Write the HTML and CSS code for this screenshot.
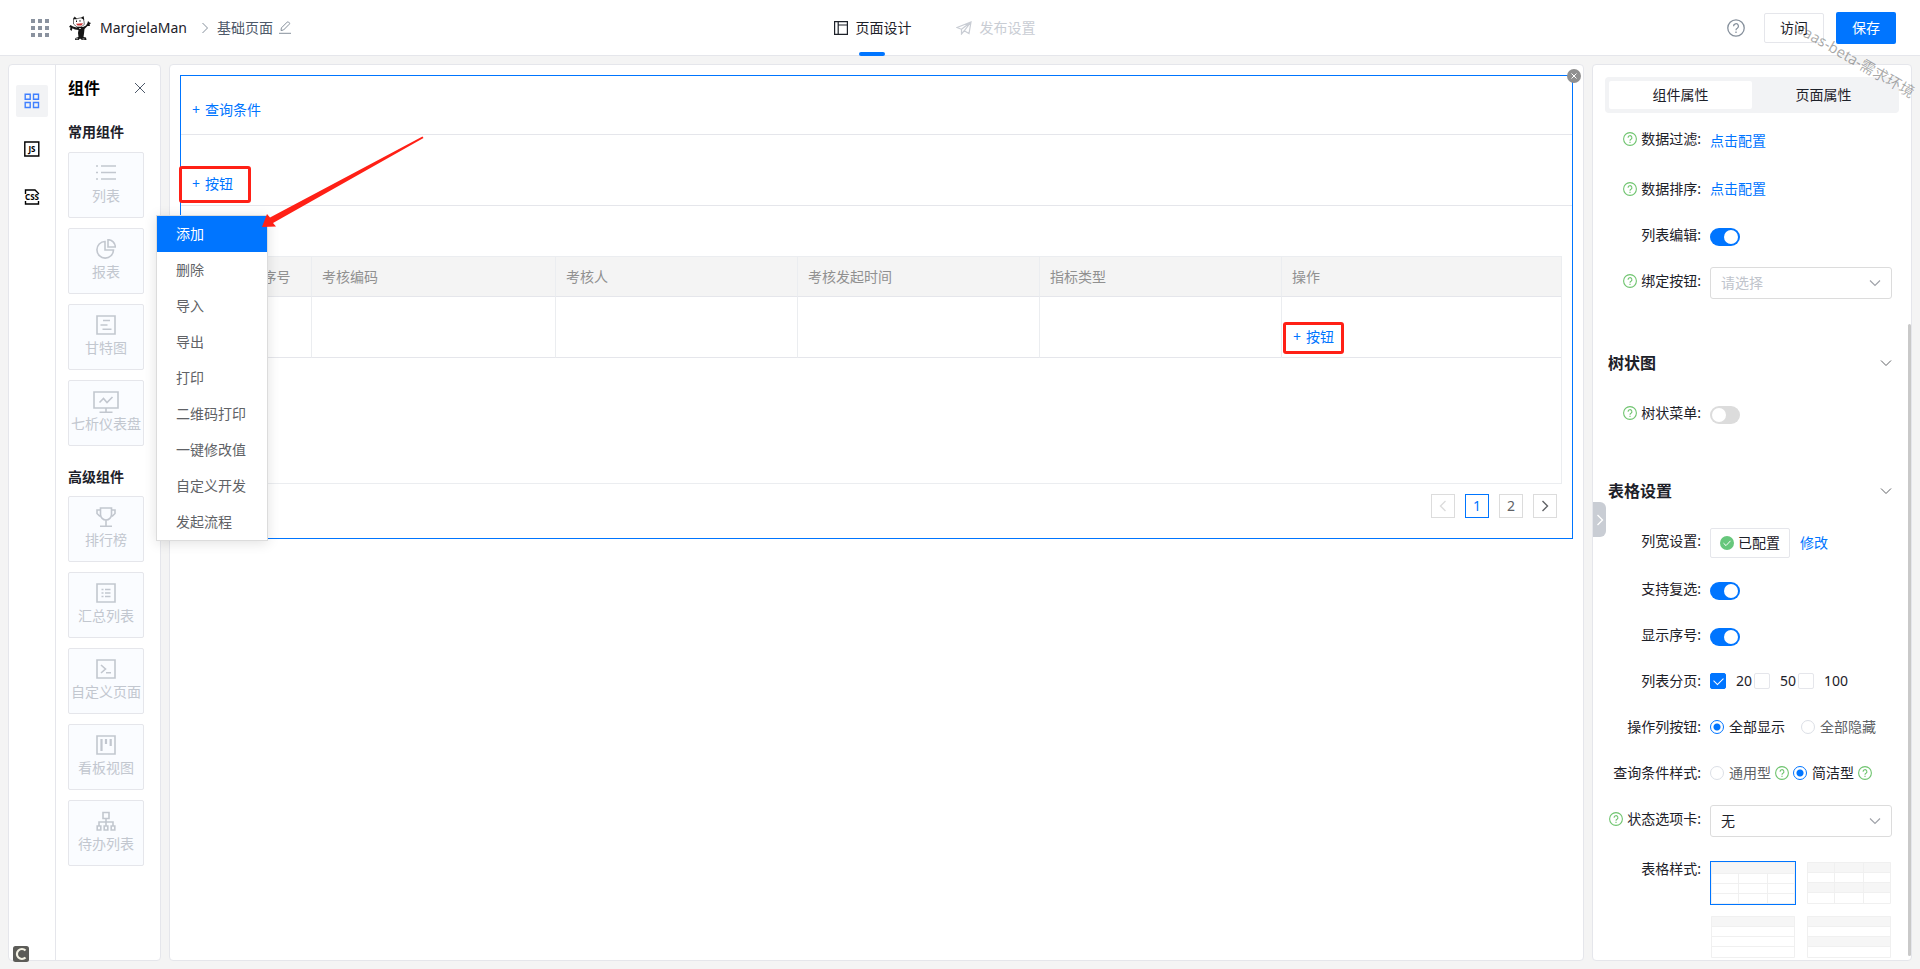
FILE: index.html
```html
<!DOCTYPE html>
<html lang="zh-CN">
<head>
<meta charset="utf-8">
<title>基础页面 - MargielaMan</title>
<link rel="stylesheet" href="styles.css">
</head>
<body>
<svg class="defs" aria-hidden="true">
  <symbol id="help" viewBox="0 0 14 14"><circle cx="7" cy="7" r="6.4"/><path d="M5.100 5.700a1.900 1.900 0 1 1 2.900 1.500c-.7.400-1 .8-1 1.500M7 9.800v1.100"/></symbol>
  <symbol id="down" viewBox="0 0 12 12"><path d="M1 3.5l5 5 5-5"/></symbol>
  <symbol id="right" viewBox="0 0 12 12"><path d="M3.5 1l5 5-5 5"/></symbol>
</svg>

<header class="topbar">
  <div class="brand">
    <button class="icon-btn" aria-label="应用"><svg class="apps" viewBox="0 0 18 18"><path d="M0 0h4v4H0zM7 0h4v4H7zM14 0h4v4h-4zM0 7h4v4H0zM7 7h4v4H7zM14 7h4v4h-4zM0 14h4v4H0zM7 14h4v4H7zM14 14h4v4h-4z"/></svg></button>
    <svg class="logo" viewBox="0 0 22 24">
      <path d="M4.500 2L7 3l3-.8L14 1.500l1 4 .3 3-3.300 2.500H8L4.500 8z" fill="#fff" stroke="#333" stroke-width=".7"/>
      <path d="M4.500 3.500L5.500.5 8 2.800zM12 2l2.500-2 .8 4z" fill="#111"/>
      <path d="M7 7.800l7-.5-1.500 2.200H8.500z" fill="#c33"/>
      <path d="M7.500 4.500v1.500M11 4.200v1.500" stroke="#111" stroke-width="1"/>
      <path d="M0 11l1.500-2 2.500 1.500 3.500 1 1-.5h5.500l3-1.500L18.500 7l.5-2 1.500 1.500L22 7l-1.500 1.500.5 1.500-2.500 0-3 3-.5 4.500-.5 3.500 2.500.5.5 2.500h-4.500L11 22.500 9.500 24H6l.5-2 3-1L9 17l.5-3-3.500-.5-2.500-1.300L2.500 15 1 13.500l.5-2z" fill="#151515"/>
      <path d="M7 22.800h2M13.500 23h2M10 12.500h2" stroke="#fff" stroke-width=".7"/>
    </svg>
    <span class="brand-name">MargielaMan</span>
    <svg class="crumb-sep" viewBox="0 0 12 12"><use href="#right"/></svg>
    <span class="crumb">基础页面</span>
    <button class="icon-btn" aria-label="重命名"><svg class="pencil" viewBox="0 0 12 13"><path d="M2 9.500l.4-2.600L8.200 1.100a1 1 0 0 1 1.400 0l.7.700a1 1 0 0 1 0 1.400L4.500 9z M0 12.300h12"/></svg></button>
  </div>
  <nav class="tabs">
    <a class="tab tab--on" href="#design"><svg class="tab-ico" viewBox="0 0 14 14"><path d="M.6.600h12.800v12.800H.6zM4.200.600v12.800M4.200 4h9.200"/></svg>页面设计</a>
    <a class="tab" href="#publish"><svg class="tab-ico tab-ico--send" viewBox="0 0 16 14"><path d="M1 6.500L15 1l-2 11.500-4.800-2.700L5.500 13V8.300zM5.500 8.300L15 1 8.200 9.800"/></svg>发布设置</a>
  </nav>
  <div class="actions">
    <button class="icon-btn" aria-label="帮助"><svg class="help-lg" viewBox="0 0 14 14"><use href="#help"/></svg></button>
    <button class="btn">访问</button>
    <button class="btn btn--primary">保存</button>
  </div>
</header>

<div class="workspace">
  <aside class="side">
    <div class="rail">
      <button class="rail-btn rail-btn--on" aria-label="组件"><svg viewBox="0 0 16 16"><path d="M1.200 1.200h5v5h-5zM9.500 1.200h5v5h-5zM1.200 9.500h5v5h-5zM9.500 9.500h5v5h-5z"/></svg></button>
      <button class="rail-btn" aria-label="脚本"><svg viewBox="0 0 16 16"><path d="M.8 1h14v14H.8z"/><text x="8" y="10.500">JS</text></svg></button>
      <button class="rail-btn" aria-label="样式"><svg viewBox="0 0 16 16"><path d="M1.500 5V1h9.500l3.500 3.500V5M1.500 12v3h13v-3"/><text x="8" y="11">CSS</text></svg></button>
    </div>
    <div class="palette">
      <div class="palette-head"><h2>组件</h2><button class="icon-btn" aria-label="关闭"><svg class="close" viewBox="0 0 10 10"><path d="M0 0l10 10M10 0L0 10"/></svg></button></div>
      <h3>常用组件</h3>
      <div class="cards">
        <button class="card"><svg viewBox="0 0 20 20"><path d="M0 3h2M0 9.500h2M0 16h2M5 3h15M5 9.500h15M5 16h15"/></svg>列表</button>
        <button class="card"><svg viewBox="0 0 20 20"><path d="M9 2.500a8.300 8.300 0 1 0 8.500 8.500H9zM12 .700v7.300h7.300A7.300 7.300 0 0 0 12 .700z"/></svg>报表</button>
        <button class="card"><svg viewBox="0 0 20 20"><path d="M1 1h18v18H1zM7 5.500h7M4.500 10h7M6.500 14.300h9"/></svg>甘特图</button>
        <button class="card"><svg class="wide" viewBox="0 0 26 22"><path d="M1 1h24v16H1zM13 17v4M6.500 21.200h13M6.500 11.500l4-4 3.500 4L19.500 6"/></svg>七析仪表盘</button>
      </div>
      <h3 class="second">高级组件</h3>
      <div class="cards">
        <button class="card"><svg viewBox="0 0 20 20"><path d="M4.500 1h11v6.500a5.500 5.500 0 0 1-11 0zM4.500 3H1v3.500L4 9.500M15.500 3H19v3.500L16 9.500M10 13v6M4 19.200h12"/></svg>排行榜</button>
        <button class="card"><svg viewBox="0 0 20 20"><path d="M1 1h18v18H1zM5.500 6.500h2M9 6.500h5.500M5.500 10h2M9 10h5.500M5.500 13.500h2M9 13.500h5.500"/></svg>汇总列表</button>
        <button class="card"><svg viewBox="0 0 20 20"><path d="M1 1h18v18H1zM5 6l4.500 4L5 14M10 13.700h5"/></svg>自定义页面</button>
        <button class="card"><svg viewBox="0 0 20 20"><path d="M1 1h18v18H1z"/><path class="bars" d="M5.500 4v12M10 4v5M14.700 4v7"/></svg>看板视图</button>
        <button class="card"><svg viewBox="0 0 20 20"><path d="M7 1.500h6v6H7zM10 7.500v7M3 14.500V11h14v3.500M1.200 15h3.600v4H1.200zM8.200 15h3.600v4H8.200zM15.200 15h3.600v4h-3.600z"/></svg>待办列表</button>
      </div>
    </div>
  </aside>

  <main class="canvas">
    <section class="block">
      <button class="block-close" aria-label="删除组件"><svg viewBox="0 0 14 14"><path d="M4.500 4.500l5 5M9.500 4.500l-5 5"/></svg></button>
      <div class="strip strip--query"><button class="add"><span>+</span>查询条件</button></div>
      <div class="strip strip--ops"><button class="add"><span>+</span>按钮</button></div>
      <div class="grid-wrap">
        <table class="grid">
          <colgroup><col class="c-check"><col class="c-no"><col class="c-code"><col class="c-mid"><col class="c-mid"><col class="c-mid"><col></colgroup>
          <thead><tr><th class="bare"></th><th class="mid">序号</th><th>考核编码</th><th>考核人</th><th>考核发起时间</th><th>指标类型</th><th>操作</th></tr></thead>
          <tbody><tr><td class="bare"></td><td></td><td></td><td></td><td></td><td></td><td><button class="add"><span>+</span>按钮</button></td></tr></tbody>
        </table>
      </div>
      <nav class="pager" aria-label="分页">
        <button class="page page--off" aria-label="上一页"><svg viewBox="0 0 12 12"><path d="M8.500 1l-5 5 5 5"/></svg></button>
        <button class="page page--on">1</button>
        <button class="page">2</button>
        <button class="page" aria-label="下一页"><svg viewBox="0 0 12 12"><use href="#right"/></svg></button>
      </nav>
    </section>
  </main>

  <aside class="props">
    <div class="switcher"><button class="seg seg--on">组件属性</button><button class="seg">页面属性</button></div>
    <button class="collapse" aria-label="收起"><svg viewBox="0 0 12 12"><use href="#right"/></svg></button>
    <div class="thumb-bar"></div>
    <div class="form">
      <div class="row row--wide"><span class="label"><svg class="help" viewBox="0 0 14 14"><use href="#help"/></svg>数据过滤:</span><div class="ctl"><a href="#filter">点击配置</a></div></div>
      <div class="row"><span class="label"><svg class="help" viewBox="0 0 14 14"><use href="#help"/></svg>数据排序:</span><div class="ctl ctl--low"><a href="#sort">点击配置</a></div></div>
      <div class="row"><label class="label" for="edit">列表编辑:</label><div class="ctl"><input class="switch" type="checkbox" role="switch" id="edit" checked></div></div>
      <div class="row"><label class="label" for="bind"><svg class="help" viewBox="0 0 14 14"><use href="#help"/></svg>绑定按钮:</label><div class="ctl"><div class="pick"><select class="empty" id="bind"><option>请选择</option></select><svg><use href="#down"/></svg></div></div></div>

      <button class="section section--tree">树状图<svg><use href="#down"/></svg></button>
      <div class="row"><label class="label" for="tree"><svg class="help" viewBox="0 0 14 14"><use href="#help"/></svg>树状菜单:</label><div class="ctl"><input class="switch" type="checkbox" role="switch" id="tree"></div></div>

      <button class="section">表格设置<svg><use href="#down"/></svg></button>
      <div class="row row--mid"><span class="label">列宽设置:</span><div class="ctl"><span class="done"><svg viewBox="0 0 14 14"><circle cx="7" cy="7" r="7"/><path d="M3.500 7.200L6 9.600l4.500-4.800"/></svg>已配置</span><a class="edit" href="#width">修改</a></div></div>
      <div class="row"><label class="label" for="multi">支持复选:</label><div class="ctl"><input class="switch" type="checkbox" role="switch" id="multi" checked></div></div>
      <div class="row"><label class="label" for="index">显示序号:</label><div class="ctl"><input class="switch" type="checkbox" role="switch" id="index" checked></div></div>
      <div class="row"><span class="label">列表分页:</span><div class="ctl ctl--low ctl--checks"><label class="check"><input type="checkbox" checked>20</label><label class="check"><input type="checkbox">50</label><label class="check"><input type="checkbox">100</label></div></div>
      <div class="row"><span class="label">操作列按钮:</span><div class="ctl ctl--low ctl--radios"><label class="radio"><input type="radio" name="ops" checked>全部显示</label><label class="radio"><input type="radio" name="ops"><span>全部隐藏</span></label></div></div>
      <div class="row"><span class="label">查询条件样式:</span><div class="ctl ctl--low ctl--tight"><label class="radio"><input type="radio" name="query"><span>通用型</span></label><svg class="help" viewBox="0 0 14 14"><use href="#help"/></svg><label class="radio"><input type="radio" name="query" checked>简洁型</label><svg class="help" viewBox="0 0 14 14"><use href="#help"/></svg></div></div>
      <div class="row row--wide"><label class="label" for="state"><svg class="help" viewBox="0 0 14 14"><use href="#help"/></svg>状态选项卡:</label><div class="ctl"><div class="pick"><select id="state"><option>无</option></select><svg><use href="#down"/></svg></div></div></div>
      <div class="row"><span class="label">表格样式:</span>
        <div class="styles">
          <button class="style style--on" aria-label="样式一"><svg viewBox="0 0 84 42"><path class="f" d="M0 0h84v11H0z"/><path d="M.5.500h83v41H.5zM0 11.500h84M0 21.500h84M0 31.500h84M27.500 11v31M56.500 11v31"/></svg></button>
          <button class="style" aria-label="样式二"><svg viewBox="0 0 84 42"><path class="f" d="M0 0h84v11H0zM0 21h84v10H0z"/><path d="M.5.500h83v41H.5zM0 10.500h84M0 20.500h84M0 30.500h84M27.500 0v42M56.500 0v42"/></svg></button>
          <button class="style" aria-label="样式三"><svg viewBox="0 0 84 42"><path class="f" d="M0 0h84v11H0z"/><path d="M.5.500h83v41H.5zM0 10.500h84M0 20.500h84M0 30.500h84"/></svg></button>
          <button class="style" aria-label="样式四"><svg viewBox="0 0 84 42"><path class="f" d="M0 0h84v11H0zM0 21h84v10H0z"/><path d="M.5.500h83v41H.5zM0 10.500h84M0 20.500h84M0 30.500h84"/></svg></button>
        </div>
      </div>
    </div>
  </aside>
</div>

<ul class="menu" role="menu">
  <li><button class="item item--on" role="menuitem">添加</button></li>
  <li><button class="item" role="menuitem">删除</button></li>
  <li><button class="item" role="menuitem">导入</button></li>
  <li><button class="item" role="menuitem">导出</button></li>
  <li><button class="item" role="menuitem">打印</button></li>
  <li><button class="item" role="menuitem">二维码打印</button></li>
  <li><button class="item" role="menuitem">一键修改值</button></li>
  <li><button class="item" role="menuitem">自定义开发</button></li>
  <li><button class="item" role="menuitem">发起流程</button></li>
</ul>

<div class="mark mark--ops"></div>
<div class="mark mark--cell"></div>
<svg class="arrow" viewBox="0 0 164 94"><path d="M1 91L6 78l3 3.500L161.500.500l1 1.500L12 87l3 3.500z"/></svg>
<div class="watermark">saas-beta-需求环境</div>
<svg class="badge" viewBox="0 0 16 16"><rect width="16" height="16" rx="2.500"/><path d="M12.500 4.500A5 5 0 1 0 12.500 11.500"/></svg>
</body>
</html>
```

FILE: styles.css
```css
* { box-sizing: border-box; }
body {
  margin: 0;
  height: 100vh;
  display: flex;
  flex-direction: column;
  overflow: hidden;
  position: relative;
  background: #f4f4f4;
  color: #1d2129;
  font: 14px/20px "Noto Sans", "Noto Sans CJK SC", sans-serif;
}
button, select, input { font: inherit; color: inherit; margin: 0; }
button { padding: 0; border: 0; background: none; cursor: pointer; }
a { color: #0075ff; text-decoration: none; }
h2, h3, ul { margin: 0; padding: 0; }
svg { display: block; flex: none; fill: none; stroke: currentColor; }
.defs { position: absolute; width: 0; height: 0; }
.icon-btn { display: flex; }

/* top bar */
.topbar {
  display: grid;
  grid-template-columns: 1fr auto 1fr;
  height: 56px;
  flex: none;
  padding: 0 24px 0 31px;
  background: #fff;
  border-bottom: 1px solid #e5e6eb;
}
.brand, .actions { display: flex; align-items: center; }
.apps { width: 18px; height: 18px; fill: #8a929f; stroke: none; }
.logo { width: 22px; height: 24px; margin-left: 20px; stroke: none; }
.brand-name { margin-left: 9px; }
.crumb-sep { width: 12px; height: 12px; margin: 0 6px 0 12px; color: #86909c; }
.crumb { color: #4e5969; }
.pencil { width: 12px; height: 13px; margin-left: 6px; color: #86909c; }
.tabs { display: flex; gap: 44px; margin-right: 58px; }
.tab { position: relative; display: flex; align-items: center; gap: 8px; color: #c9cdd4; }
.tab--on { color: #1d2129; }
.tab--on::after {
  content: "";
  position: absolute;
  left: 50%;
  bottom: -1px;
  width: 26px;
  height: 4px;
  margin-left: -14px;
  border-radius: 2px;
  background: #0075ff;
}
.tab-ico { width: 14px; height: 14px; stroke-width: 1.2; }
.tab-ico--send { width: 16px; }
.actions { justify-content: flex-end; }
.help-lg { width: 18px; height: 18px; margin-right: 19px; color: #86909c; }
.btn { width: 60px; height: 30px; border: 1px solid #e5e6eb; border-radius: 2px; background: #fff; }
.btn--primary { height: 32px; margin-left: 12px; border: 0; background: #0075ff; color: #fff; }

.workspace { flex: 1; min-height: 0; display: flex; gap: 8px; padding: 8px; }
.side, .canvas, .props { border: 1px solid #e5e6eb; border-radius: 4px; background: #fff; }

/* left side */
.side { display: flex; flex: none; }
.rail {
  display: flex;
  flex-direction: column;
  gap: 16px;
  width: 47px;
  padding: 20px 7px;
  border-right: 1px solid #e5e6eb;
}
.rail-btn {
  display: flex;
  align-items: center;
  justify-content: center;
  width: 32px;
  height: 32px;
  border-radius: 2px;
  color: #000;
}
.rail-btn--on { background: #f2f3f5; color: #4080ff; }
.rail-btn svg { width: 16px; height: 16px; stroke-width: 1.4; }
.rail-btn text { fill: currentColor; stroke: none; font: bold 8px "Noto Sans", sans-serif; text-anchor: middle; }
.palette { width: 104px; padding: 11px 16px 0 12px; }
.palette-head { display: flex; justify-content: space-between; align-items: center; width: 77px; height: 24px; color: #000; }
.palette h2 { font-size: 16px; line-height: 24px; }
.close { width: 10px; height: 10px; color: #4e5969; }
.palette h3 { margin-top: 22px; font-size: 14px; line-height: 20px; }
.palette .second { margin-top: 21px; }
.cards { display: flex; flex-direction: column; gap: 10px; margin-top: 10px; }
.palette .second + .cards { margin-top: 9px; }
.card {
  display: flex;
  flex-direction: column;
  align-items: center;
  gap: 3px;
  height: 66px;
  padding-top: 10px;
  border: 1px solid #e5e6eb;
  border-radius: 2px;
  background: #fafcff;
  color: #c2c7cf;
  white-space: nowrap;
}
.card svg { width: 20px; height: 20px; stroke-width: 1.6; }
.card .wide { width: 26px; height: 22px; margin-bottom: -2px; }
.card .bars { stroke-width: 2.2; }

/* canvas */
.canvas { flex: 1; min-width: 0; padding: 10px; }
.block { position: relative; border: 1px solid #0075ff; }
.block-close {
  position: absolute;
  top: -7px;
  right: -9px;
  width: 14px;
  height: 14px;
  border-radius: 50%;
  background: #909090;
  color: #fff;
}
.strip { border-bottom: 1px solid #e5e6eb; }
.strip--query { padding: 24px 11px 14px; }
.strip--ops { padding: 39px 11px 11px; }
.add { display: flex; gap: 5px; color: #0075ff; line-height: 20px; }
.grid-wrap { height: 228px; margin: 50px 10px 0; border: 1px solid #ebedf0; }
.grid { width: 100%; table-layout: fixed; border-collapse: separate; border-spacing: 0; }
.c-check { width: 50px; }
.c-no { width: 70px; }
.c-code { width: 244px; }
.c-mid { width: 242px; }
.grid th, .grid td { padding: 0 10px; border-right: 1px solid #ebedf0; border-bottom: 1px solid #e5e6eb; text-align: left; }
.grid .bare, .grid th:last-child, .grid td:last-child { border-right: 0; }
.grid th { height: 40px; background: #f4f4f4; color: #909090; font-weight: normal; }
.grid .mid { text-align: center; }
.grid td { height: 61px; padding: 30px 11px 10px; vertical-align: top; }
.pager { display: flex; justify-content: flex-end; gap: 10px; margin: 10px 15px 20px; }
.page {
  display: flex;
  align-items: center;
  justify-content: center;
  width: 24px;
  height: 24px;
  border: 1px solid #dcdcdc;
  color: #606266;
}
.page svg { width: 12px; height: 12px; stroke-width: 1.4; }
.page--on { border-color: #0075ff; color: #0075ff; }
.page--off { color: #dcdcdc; }

/* properties */
.props { position: relative; flex: none; width: 320px; padding: 12px 12px 0; overflow: hidden; }
.switcher { display: flex; padding: 4px; border-radius: 4px; background: #f2f3f5; }
.seg { flex: 1; height: 28px; border-radius: 2px; }
.seg--on { background: #fff; }
.collapse {
  position: absolute;
  left: 0;
  top: 437px;
  width: 13px;
  height: 35px;
  border-radius: 0 6px 6px 0;
  background: #c9cdd4;
  color: #fff;
}
.collapse svg { width: 12px; height: 12px; margin-left: 1px; stroke-width: 1.3; }
.thumb-bar { position: absolute; right: 0; top: 259px; bottom: 4px; width: 3px; border-radius: 2px; background: #c9c9c9; }
.form { padding: 12px 7px 0 0; }
.row { display: grid; grid-template-columns: 96px 1fr; column-gap: 9px; min-height: 32px; margin-bottom: 14px; }
.row--mid { margin-bottom: 16px; }
.row--wide { margin-bottom: 18px; }
.label { display: flex; align-items: center; justify-content: flex-end; gap: 4px; height: 28px; white-space: nowrap; }
.help { width: 14px; height: 14px; color: #6fc46f; stroke-width: 1.1; }
.ctl { display: flex; align-items: center; height: 32px; white-space: nowrap; }
.ctl--low { height: 28px; }
.ctl--checks { gap: 2px; }
.ctl--tight { gap: 4px; }
.ctl--radios { gap: 16px; }
.switch { appearance: none; width: 30px; height: 18px; padding: 2px; border-radius: 9px; background: #dcdcdc; }
.switch::before { content: ""; display: block; width: 14px; height: 14px; border-radius: 50%; background: #fff; }
.switch:checked { background: #0075ff; }
.switch:checked::before { margin-left: 12px; }
.pick { position: relative; flex: 1; }
.pick select {
  appearance: none;
  display: block;
  width: 100%;
  height: 32px;
  padding: 0 10px;
  border: 1px solid #dcdcdc;
  border-radius: 3px;
  background: #fff;
}
.pick .empty { color: #c0c4cc; }
.pick svg { position: absolute; right: 11px; top: 10px; width: 12px; height: 12px; color: #a0a3aa; stroke-width: 1.2; pointer-events: none; }
.section {
  display: flex;
  align-items: center;
  justify-content: space-between;
  width: 100%;
  margin: 48px 0 24px;
  padding-left: 3px;
  font-size: 16px;
  font-weight: 600;
  line-height: 24px;
}
.section--tree { margin-top: 52px; }
.row:has(+ .section) { margin-bottom: 0; }
.section svg { width: 12px; height: 12px; color: #606266; }
.done { display: flex; align-items: center; gap: 4px; height: 30px; padding: 0 9px; border: 1px solid #e5e6eb; border-radius: 2px; }
.done svg { width: 14px; height: 14px; color: #fff; }
.done circle { fill: #67c77c; stroke: none; }
.edit { margin-left: 10px; }
.check { display: flex; align-items: center; gap: 10px; }
.check input {
  appearance: none;
  width: 16px;
  height: 16px;
  border: 1px solid #e5e6eb;
  border-radius: 2px;
}
.check input:checked { display: grid; place-items: center; border-color: #0075ff; background: #0075ff; }
.check input:checked::before {
  content: "";
  width: 8px;
  height: 5px;
  margin-bottom: 2px;
  border: solid #fff;
  border-width: 0 0 1px 1px;
  transform: rotate(-45deg);
}
.radio { display: flex; align-items: center; gap: 5px; }
.radio span { color: #606266; }
.radio input { appearance: none; width: 14px; height: 14px; border: 1px solid #dcdfe6; border-radius: 50%; }
.radio input:checked { border-color: #0075ff; background: radial-gradient(circle, #0075ff 3px, #fff 4px); }
.styles { display: grid; grid-template-columns: 1fr 1fr; gap: 10px; padding-top: 6px; }
.style { padding: 0; border: 1px solid transparent; }
.style--on { border-color: #0075ff; }
.style svg { width: 100%; height: 42px; stroke: #f0f0f0; }
.style .f { fill: #f6f6f6; stroke: none; }

/* floating layers */
.menu {
  position: absolute;
  left: 156px;
  top: 215px;
  width: 112px;
  border: 1px solid #dcdcdc;
  background: #fff;
  box-shadow: 0 2px 12px rgba(0, 0, 0, 0.12);
  list-style: none;
}
.item { display: block; width: 100%; height: 36px; padding: 0 19px; color: #606266; text-align: left; }
.item--on { background: #0075ff; color: #fff; }
.mark { position: absolute; border: 3px solid #ff2016; border-radius: 3px; pointer-events: none; }
.mark--ops { left: 179px; top: 166px; width: 72px; height: 37px; }
.mark--cell { left: 1283px; top: 322px; width: 61px; height: 32px; }
.arrow { position: absolute; left: 261px; top: 136px; width: 164px; height: 94px; fill: #ff2016; stroke: none; pointer-events: none; }
.watermark {
  position: absolute;
  right: -2px;
  top: 50px;
  color: rgba(0, 0, 0, 0.34);
  font-size: 15px;
  white-space: nowrap;
  transform: rotate(30deg);
  pointer-events: none;
}
.badge { position: absolute; left: 13px; bottom: 7px; width: 16px; height: 16px; fill: #5c5c58; stroke: none; }
.badge path { fill: none; stroke: #f4f2e4; stroke-width: 2.2; }
```
